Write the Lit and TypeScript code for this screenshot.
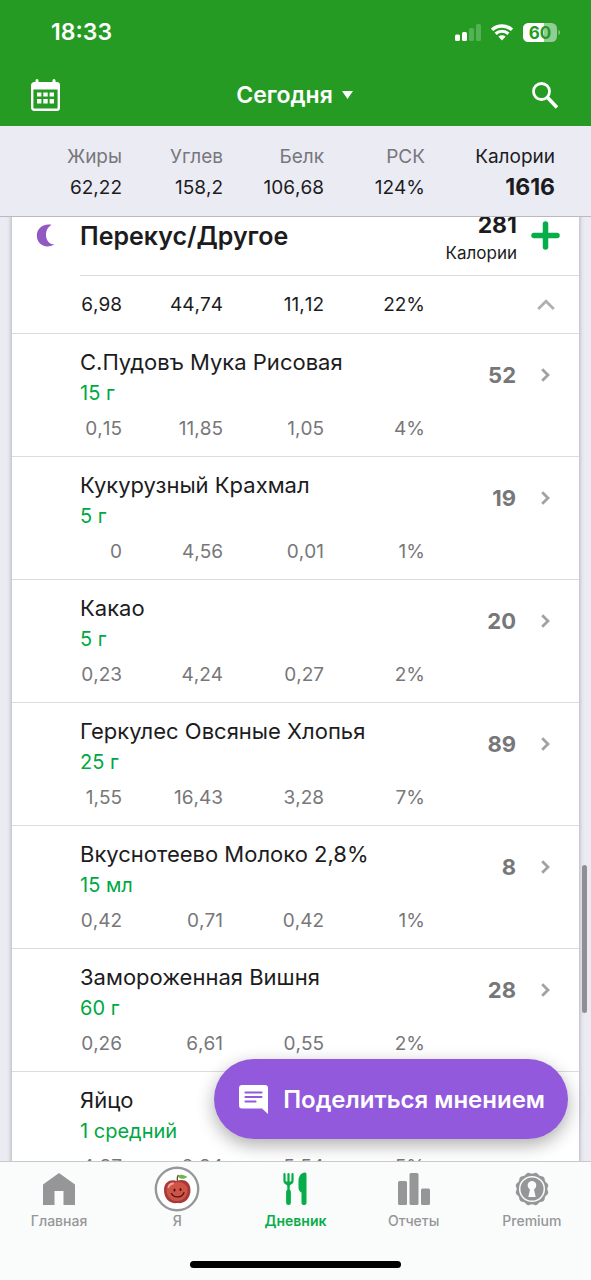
import { LitElement, html, css, svg } from "lit";
import { customElement, property } from "lit/decorators.js";
import { classMap } from "lit/directives/class-map.js";

interface Food {
  name: string;
  portion: string;
  kcal: string;
  values: string[];
}

const FOODS: Food[] = [
  { name: "С.Пудовъ Мука Рисовая", portion: "15 г", kcal: "52", values: ["0,15", "11,85", "1,05", "4%"] },
  { name: "Кукурузный Крахмал", portion: "5 г", kcal: "19", values: ["0", "4,56", "0,01", "1%"] },
  { name: "Какао", portion: "5 г", kcal: "20", values: ["0,23", "4,24", "0,27", "2%"] },
  { name: "Геркулес Овсяные Хлопья", portion: "25 г", kcal: "89", values: ["1,55", "16,43", "3,28", "7%"] },
  { name: "Вкуснотеево Молоко 2,8%", portion: "15 мл", kcal: "8", values: ["0,42", "0,71", "0,42", "1%"] },
  { name: "Замороженная Вишня", portion: "60 г", kcal: "28", values: ["0,26", "6,61", "0,55", "2%"] },
  { name: "Яйцо", portion: "1 средний", kcal: "65", values: ["4,37", "0,34", "5,54", "5%"] },
];

@customElement("status-bar")
class StatusBar extends LitElement {
  static styles = css`
    :host {
      display: flex;
      align-items: center;
      justify-content: space-between;
      height: 64px;
      padding: 0 31px 0 51px;
      box-sizing: border-box;
      color: #fff;
    }
    .time {
      font-size: 23px;
      line-height: 28px;
      font-weight: 600;
    }
    .indicators {
      display: flex;
      align-items: center;
      gap: 10px;
    }
    svg {
      display: block;
    }
    .charge {
      font-size: 17px;
      font-weight: 700;
      fill: #259b24;
    }
  `;

  render() {
    return html`
      <span class="time">18:33</span>
      <div class="indicators">
        <svg width="26" height="17" viewBox="0 0 26 17" fill="#fff" aria-hidden="true">
          <rect x="0" y="10.5" width="5" height="6.5" rx="1.5" />
          <rect x="7" y="8" width="5" height="9" rx="1.5" />
          <rect x="14" y="4" width="5" height="13" rx="1.5" opacity=".22" />
          <rect x="21" y="0" width="5" height="17" rx="1.5" opacity=".22" />
        </svg>
        <svg width="22" height="17" viewBox="0 0 22 17" fill="none" stroke="#fff" aria-hidden="true">
          <path d="M1 5.8C6.8 0.7 15.2 0.7 21 5.8" stroke-width="3.4" />
          <path d="M4.6 9.7C8.3 6.4 13.7 6.4 17.4 9.7" stroke-width="3.2" />
          <path d="M7.4 12.6C9.5 10.8 12.5 10.8 14.6 12.6L11 16.6Z" fill="#fff" stroke="none" />
        </svg>
        <svg width="37" height="19" viewBox="0 0 37 19" aria-label="60">
          <defs>
            <clipPath id="body"><rect width="34" height="19" rx="5.5" /></clipPath>
          </defs>
          <g clip-path="url(#body)">
            <rect width="34" height="19" fill="#92cd91" />
            <rect width="21" height="19" fill="#fff" />
          </g>
          <path d="M35.5 7C37.4 7.5 37.4 11.5 35.5 12Z" fill="#92cd91" />
          <text class="charge" x="17" y="15.5" text-anchor="middle">60</text>
        </svg>
      </div>
    `;
  }
}

@customElement("top-nav")
class TopNav extends LitElement {
  static styles = css`
    :host {
      display: grid;
      grid-template-columns: 1fr auto 1fr;
      align-items: center;
      height: 62px;
      padding: 0 33px 0 31px;
      box-sizing: border-box;
    }
    button {
      display: flex;
      align-items: center;
      padding: 0;
      border: 0;
      background: none;
      color: #fff;
      font: inherit;
      cursor: pointer;
    }
    svg {
      display: block;
    }
    .search {
      justify-self: end;
    }
    .day {
      gap: 9px;
      font-size: 23px;
      line-height: 28px;
      font-weight: 600;
    }
  `;

  render() {
    return html`
      <button aria-label="Календарь">
        <svg width="29" height="32" viewBox="0 0 29 32" fill="none">
          <path d="M6 1.5v4M23 1.5v4" stroke="#fff" stroke-width="3" stroke-linecap="round" />
          <rect x="1.2" y="4.2" width="26.6" height="26.6" rx="2" stroke="#fff" stroke-width="2.4" />
          <path d="M1 4h27v6.5H1z" fill="#fff" />
          <path
            d="M6 13.5h4.4v4H6zM12.3 13.5h4.4v4h-4.4zM18.6 13.5h4.4v4h-4.4zM6 20h4.4v4.4H6zM12.3 20h4.4v4.4h-4.4zM18.6 20h4.4v4.4h-4.4z"
            fill="#fff"
          />
        </svg>
      </button>
      <button class="day">
        Сегодня
        <svg width="11" height="8" viewBox="0 0 11 8" aria-hidden="true"><path d="M0 0h11L5.5 8z" fill="#fff" /></svg>
      </button>
      <button class="search" aria-label="Поиск">
        <svg width="26" height="27" viewBox="0 0 26 27" fill="none" stroke="#fff" stroke-width="2.8">
          <circle cx="9.5" cy="9.5" r="8" />
          <path d="M15.3 15.3L25 25.5" stroke-width="3.6" />
        </svg>
      </button>
    `;
  }
}

@customElement("day-summary")
class DaySummary extends LitElement {
  static styles = css`
    :host {
      display: block;
      padding: 15px 36px 13px 21px;
      background: #ebebf3;
      border-bottom: 1px solid #b9b9bf;
    }
    table,
    thead,
    tbody {
      display: block;
    }
    tr {
      display: grid;
      grid-template-columns: repeat(4, 101fr) 130fr;
      text-align: right;
    }
    th,
    td {
      padding: 0;
      font-size: 19px;
      line-height: 31px;
      font-weight: 400;
      font-kerning: none;
      color: #1c1c1e;
    }
    th {
      color: #77777c;
    }
    th:last-child {
      color: #1c1c1e;
    }
    td:last-child {
      font-size: 23px;
      font-weight: 700;
    }
  `;

  render() {
    return html`
      <table>
        <thead>
          <tr>
            ${["Жиры", "Углев", "Белк", "РСК", "Калории"].map((t) => html`<th scope="col">${t}</th>`)}
          </tr>
        </thead>
        <tbody>
          <tr>
            ${["62,22", "158,2", "106,68", "124%", "1616"].map((t) => html`<td>${t}</td>`)}
          </tr>
        </tbody>
      </table>
    `;
  }
}

@customElement("food-item")
class FoodItem extends LitElement {
  @property({ attribute: false }) food!: Food;

  static styles = css`
    :host {
      display: block;
      border-bottom: 1px solid #dcdcde;
    }
    .row {
      display: block;
      padding: 13px 0 12px;
      color: inherit;
      text-decoration: none;
    }
    .head {
      display: flex;
      padding: 0 29px 0 68px;
    }
    .what {
      flex: 1;
      min-width: 0;
    }
    .name {
      font-size: 22px;
      line-height: 31px;
    }
    .portion {
      font-size: 20px;
      line-height: 31px;
      color: #00a843;
    }
    .energy {
      display: flex;
      align-items: center;
      gap: 25px;
      height: 56px;
      font-size: 22px;
      font-weight: 700;
      color: #77777a;
    }
    svg {
      display: block;
    }
    .values {
      display: grid;
      grid-template-columns: repeat(4, 101fr) 130fr;
      padding: 5px 24px 0 9px;
      font-size: 19px;
      line-height: 30px;
      font-kerning: none;
      text-align: right;
      color: #77777a;
    }
  `;

  render() {
    const f = this.food;
    return html`
      <a class="row" href="#food">
        <div class="head">
          <div class="what">
            <div class="name">${f.name}</div>
            <div class="portion">${f.portion}</div>
          </div>
          <div class="energy">
            <span>${f.kcal}</span>
            <svg width="9" height="14" viewBox="0 0 9 14" fill="none" stroke="#a2a2a5" stroke-width="2.8" aria-hidden="true">
              <path d="M1.2 1.2L7 7L1.2 12.8" />
            </svg>
          </div>
        </div>
        <div class="values">${f.values.map((v) => html`<span>${v}</span>`)}</div>
      </a>
    `;
  }
}

@customElement("meal-card")
class MealCard extends LitElement {
  static styles = css`
    :host {
      display: block;
      margin: -21px 12px 0;
      background: #fff;
      box-shadow: 0 0 4px 1px #b4b4be;
      color: #1c1c1e;
    }
    .head {
      display: flex;
      align-items: center;
      height: 79px;
      padding: 0 19px 0 24px;
    }
    svg {
      display: block;
    }
    h2 {
      flex: 1;
      margin: 0 0 0 24px;
      font-size: 25px;
      line-height: 32px;
      font-weight: 600;
    }
    .total {
      margin-right: 14px;
      text-align: right;
    }
    .sum {
      font-size: 23px;
      line-height: 34px;
      font-weight: 700;
      font-kerning: none;
    }
    .unit {
      font-size: 17px;
      line-height: 22px;
    }
    button {
      display: block;
      padding: 0;
      border: 0;
      background: none;
      cursor: pointer;
    }
    .line {
      height: 1px;
      margin: 0 0 0 68px;
      border: 0;
      background: #dcdcde;
    }
    .totals {
      display: grid;
      grid-template-columns: repeat(4, 101fr) 130fr;
      align-items: center;
      height: 58px;
      padding: 0 24px 0 9px;
      box-sizing: border-box;
      border-bottom: 1px solid #dcdcde;
      font-size: 19px;
      font-kerning: none;
      text-align: right;
    }
    .fold {
      justify-self: end;
    }
  `;

  render() {
    return html`
      <div class="head">
        <svg width="20" height="23" viewBox="0 0 20 23" aria-hidden="true">
          <path d="M15.5 0.7C6.5 -1 0.8 5 0.8 11.5C0.8 20 9 25.5 18.5 20.5C8.5 20 7 5.5 15.5 0.7Z" fill="#9159c1" />
        </svg>
        <h2>Перекус/Другое</h2>
        <div class="total">
          <div class="sum">281</div>
          <div class="unit">Калории</div>
        </div>
        <button aria-label="Добавить">
          <svg width="29" height="29" viewBox="0 0 29 29" stroke="#07ad49" stroke-width="5.5" stroke-linecap="round">
            <path d="M14.5 3v23M3 14.5h23" />
          </svg>
        </button>
      </div>
      <hr class="line" />
      <div class="totals">
        <span>6,98</span><span>44,74</span><span>11,12</span><span>22%</span>
        <button class="fold" aria-label="Свернуть">
          <svg width="18" height="11" viewBox="0 0 18 11" fill="none" stroke="#b0b0b2" stroke-width="2.8">
            <path d="M1.2 10L9 2.2L16.8 10" />
          </svg>
        </button>
      </div>
      ${FOODS.map((f) => html`<food-item .food=${f}></food-item>`)}
    `;
  }
}

const HOME = svg`<path d="M0 11.5L16 0L32 11.5V32H20.5V18H11.5V32H0Z" fill="currentColor"/>`;

const APPLE = svg`
  <circle cx="16" cy="16" r="21.2" fill="#fff" stroke="#97979b" stroke-width="2.4"/>
  <path d="M16.5 8C16 5 16 3.5 17.5 2" fill="none" stroke="#7a3b22" stroke-width="1.3"/>
  <path d="M16.5 3.5C19 0.5 23 1.5 26.5 4C23 6.5 20 6.5 16.5 3.5Z" fill="#6bb552"/>
  <path d="M16 8C22 5.5 29.5 8 29.5 17C29.5 26 23 31 16.5 30C9 31 3 26 3 17C3 8.5 10 5.5 16 8Z" fill="#a8393a"/>
  <path d="M14 9.5C20 8 26 11 26.5 17C27 23 22 28 16 28C9 28 5 22 5.5 16C6 11 9.5 9 14 9.5Z" fill="#cf5448"/>
  <path d="M7.5 14C8.5 11.5 10 10.5 12 10.5" fill="none" stroke="#f0a79a" stroke-width="1.8" stroke-linecap="round"/>
  <ellipse cx="13.5" cy="17" rx="1" ry="1.5" fill="#3d0f0c"/>
  <ellipse cx="19.5" cy="16.5" rx="1" ry="1.5" fill="#3d0f0c"/>
  <path d="M10.5 20.5C13 25.5 21 25 23 19.5" fill="none" stroke="#4a120e" stroke-width="1.2" stroke-linecap="round"/>`;

const CUTLERY = svg`
  <path d="M5.5 1.2V7.5C5.5 12 13.5 12 13.5 7.5V1.2" fill="none" stroke="currentColor" stroke-width="2.2" stroke-linecap="round"/>
  <path d="M9.5 1.2V10" stroke="currentColor" stroke-width="2.2" stroke-linecap="round"/>
  <path d="M6 8.5H13L10.7 13V18H8.3V13Z" fill="currentColor"/>
  <path d="M9.5 19V29.7" stroke="currentColor" stroke-width="4.8" stroke-linecap="round"/>
  <path d="M27.5 1.5V30C27.5 32.8 22.5 32.8 22.5 30V19.5C20.5 18.5 19.5 17 19.5 14.5V8C19.5 3 22.5 -1 26.5 -0.5Q27.5 0 27.5 1.5Z" fill="currentColor"/>`;

const BARS = svg`<g fill="currentColor">
  <rect x="0" y="8" width="9" height="24" rx="1.5"/>
  <rect x="11.5" y="0" width="9" height="32" rx="1.5"/>
  <rect x="23" y="15.5" width="9" height="16.5" rx="1.5"/></g>`;

// Outline of the badge: a circle whose radius ripples twelve times per turn.
const RIM = Array.from({ length: 96 }, (_, i) => {
  const a = (i * Math.PI) / 48;
  const r = 16 - 0.7 * Math.cos(12 * a);
  return `${(16 + r * Math.cos(a)).toFixed(2)},${(16 + r * Math.sin(a)).toFixed(2)}`;
}).join(" ");

const BADGE = svg`
  <polygon points=${RIM} fill="currentColor"/>
  <circle cx="16" cy="16" r="12.3" fill="none" stroke="#fafbfb" stroke-width="1.5"/>
  <path d="M12.3 24L14 16.5C10 13.5 11.5 8 16 8C20.5 8 22 13.5 18 16.5L19.7 24Z" fill="#fafbfb"/>`;

const TABS = [
  { label: "Главная", icon: HOME },
  { label: "Я", icon: APPLE },
  { label: "Дневник", icon: CUTLERY, active: true },
  { label: "Отчеты", icon: BARS },
  { label: "Premium", icon: BADGE },
];

@customElement("tab-bar")
class TabBar extends LitElement {
  static styles = css`
    :host {
      display: block;
      padding-bottom: 12px;
      background: #fafbfb;
      border-top: 1px solid #c9c9cc;
    }
    nav {
      display: grid;
      grid-template-columns: repeat(5, 1fr);
    }
    a {
      display: flex;
      flex-direction: column;
      align-items: center;
      gap: 6px;
      padding: 11px 0 30px;
      color: #969698;
      text-decoration: none;
      font-size: 14px;
      line-height: 20px;
      font-weight: 500;
    }
    .active {
      color: #07ad49;
      font-weight: 600;
    }
    svg {
      display: block;
      overflow: visible;
    }
    .indicator {
      width: 211px;
      height: 7px;
      margin: 0 auto;
      border-radius: 4px;
      background: #000;
    }
  `;

  render() {
    return html`
      <nav>
        ${TABS.map(
          (t) => html`
            <a href="#tab" class=${classMap({ active: !!t.active })}>
              <svg width="32" height="32" viewBox="0 0 32 32" aria-hidden="true">${t.icon}</svg>
              ${t.label}
            </a>
          `,
        )}
      </nav>
      <div class="indicator"></div>
    `;
  }
}

@customElement("app-root")
class AppRoot extends LitElement {
  static styles = css`
    :host {
      display: flex;
      flex-direction: column;
      height: 100vh;
      overflow: hidden;
      background: #ebebf3;
      font-family: Inter, "Liberation Sans", sans-serif;
    }
    header {
      background: #259b24;
    }
    main {
      position: relative;
      flex: 1;
      min-height: 0;
      overflow: hidden;
    }
    .thumb {
      position: absolute;
      top: 648px;
      right: 4px;
      width: 5px;
      height: 148px;
      border-radius: 3px;
      background: #8f8f94;
    }
    .share {
      position: absolute;
      right: 23px;
      bottom: 22px;
      display: flex;
      align-items: center;
      gap: 15px;
      height: 80px;
      padding: 0 23px 0 25px;
      border: 0;
      border-radius: 40px;
      background: #9359dc;
      box-shadow: 0 6px 18px rgba(0, 0, 0, 0.32);
      color: #fff;
      font: inherit;
      font-size: 24px;
      font-weight: 600;
      white-space: nowrap;
      cursor: pointer;
    }
    .share svg {
      display: block;
    }
  `;

  render() {
    return html`
      <header>
        <status-bar></status-bar>
        <top-nav></top-nav>
      </header>
      <day-summary></day-summary>
      <main>
        <meal-card></meal-card>
        <div class="thumb"></div>
        <button class="share">
          <svg width="29" height="29" viewBox="0 0 29 29" aria-hidden="true">
            <path d="M3 0H26C28 0 29 1 29 3V29L23 23.5H3C1 23.5 0 22.5 0 20.5V3C0 1 1 0 3 0Z" fill="#fff" />
            <path d="M6.5 7.5H22.5M6.5 12H22.5M6.5 16.5H16.5" stroke="#9359dc" stroke-width="2.2" stroke-linecap="round" />
          </svg>
          Поделиться мнением
        </button>
      </main>
      <tab-bar></tab-bar>
    `;
  }
}
